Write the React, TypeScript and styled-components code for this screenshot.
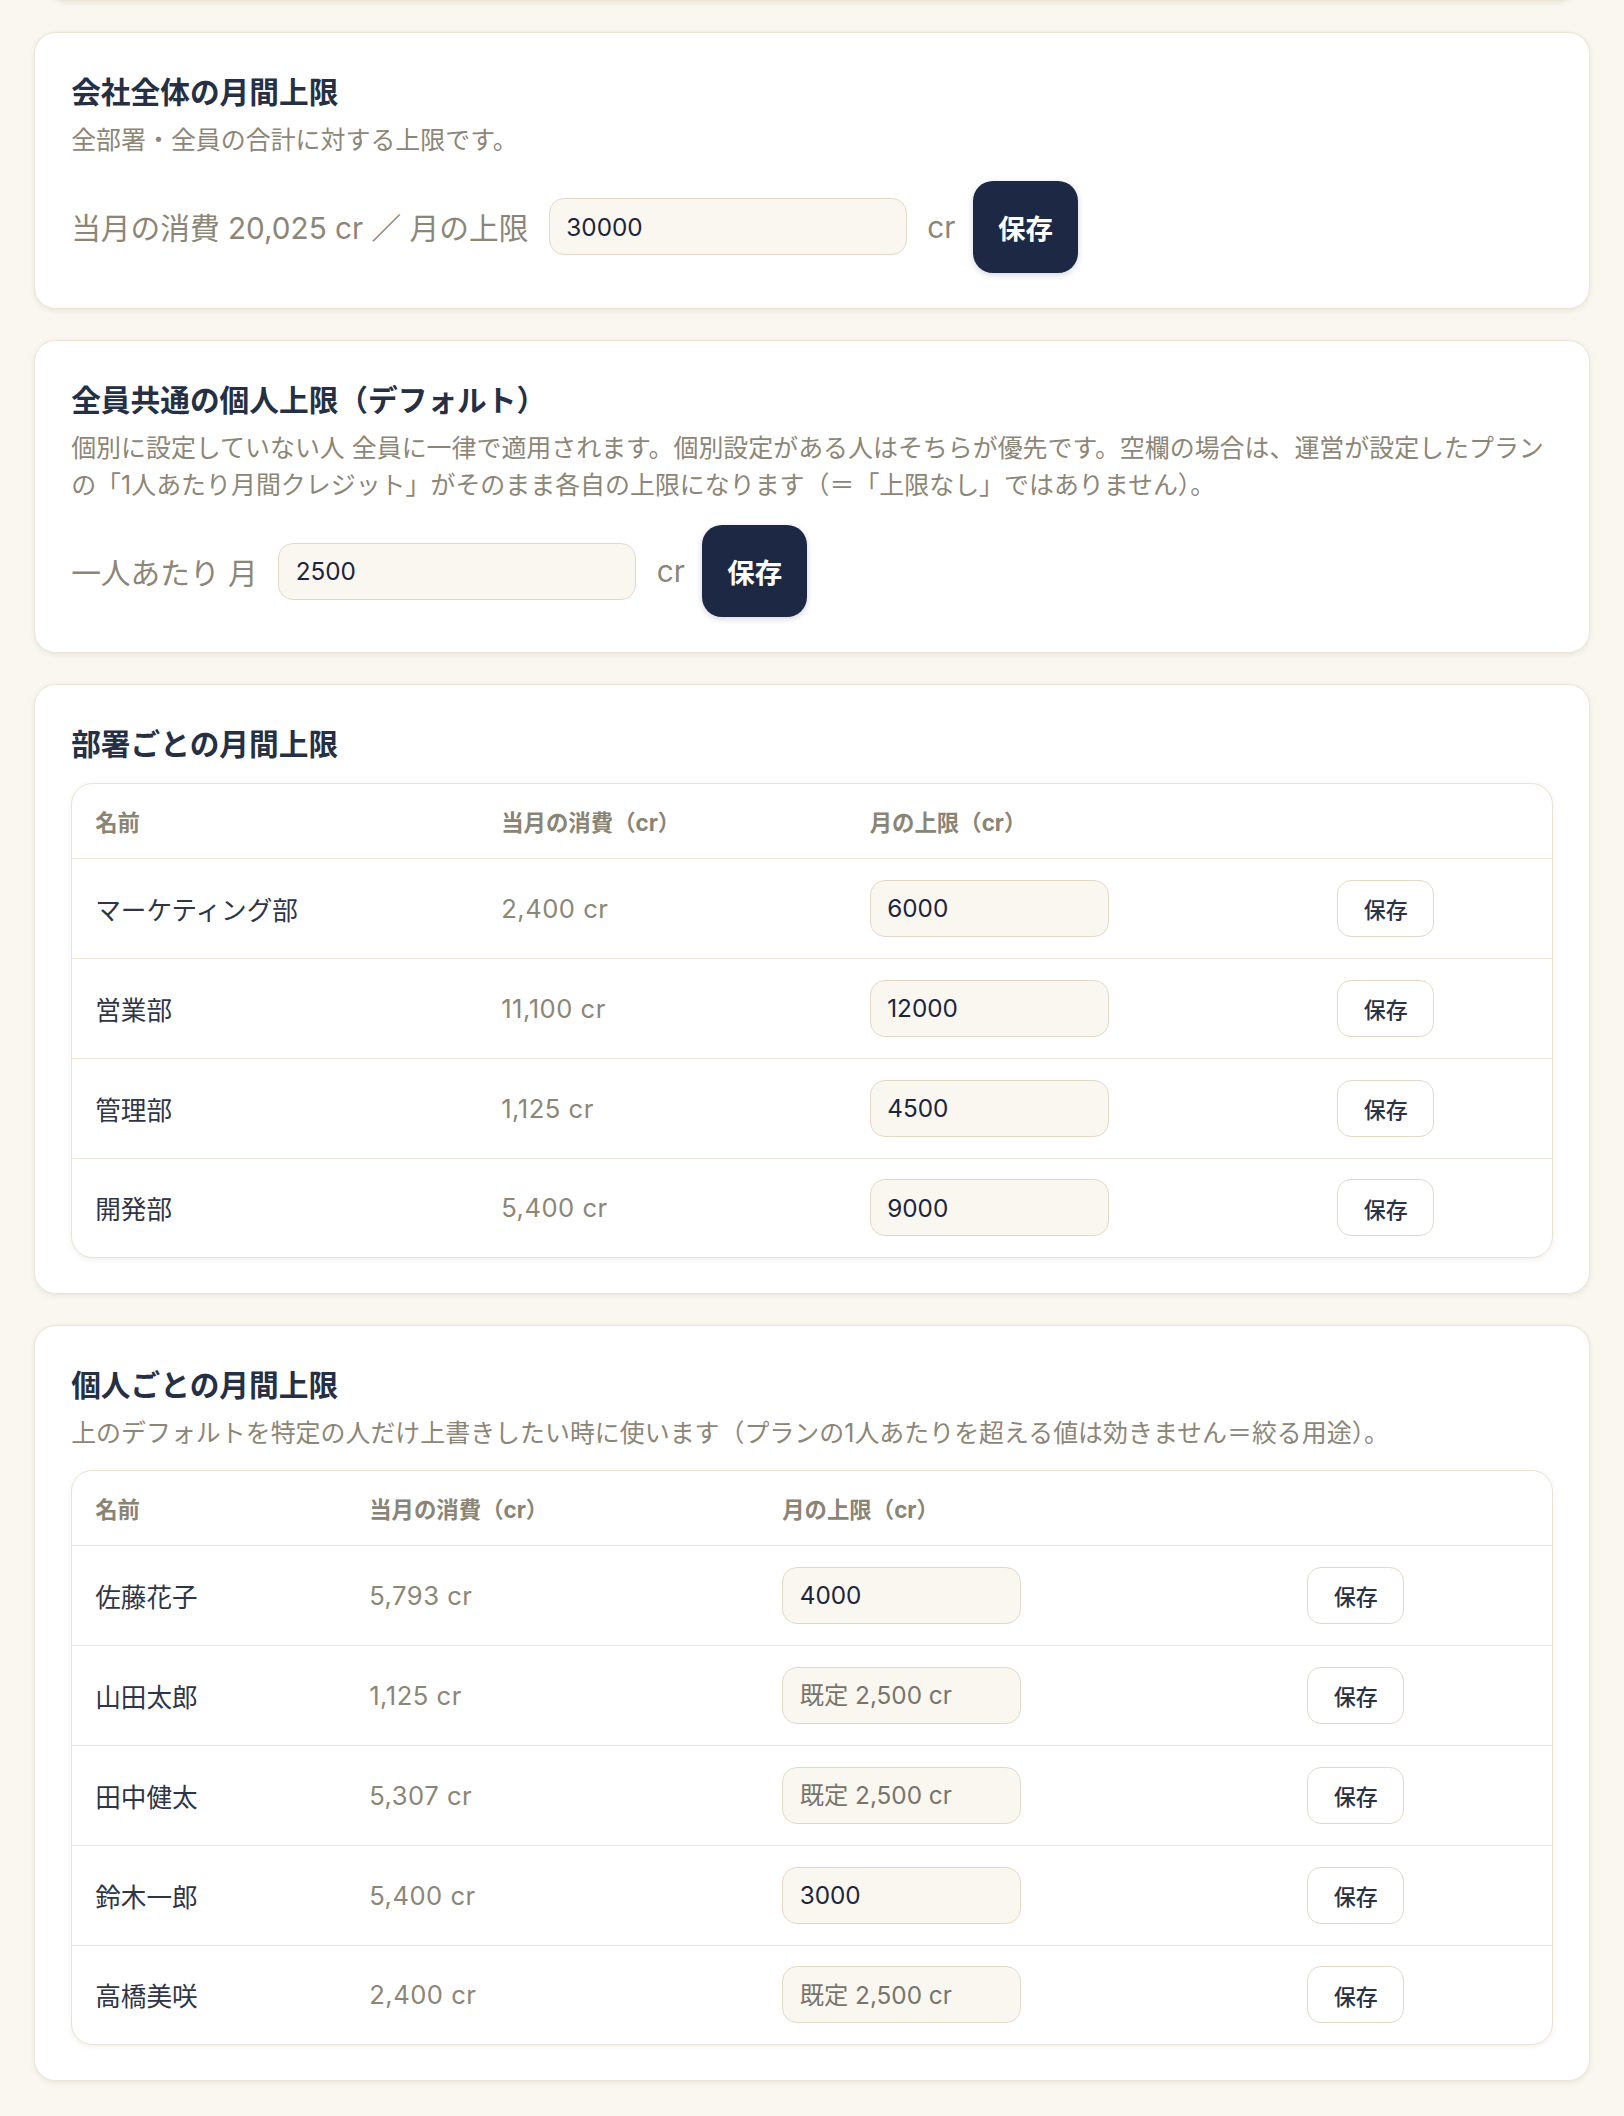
import { createGlobalStyle } from "styled-components";
import styled from "styled-components";

const GlobalStyle = createGlobalStyle`
    html, body {
        margin: 0;
        padding: 0;
        background: #faf7f0;
    }
    body {
        font-family: Inter, "Noto Sans CJK JP", sans-serif;
        color: #253045;
    }
    * {
        box-sizing: border-box;
    }
`

const Page = styled.div`
    display: flex;
    flex-direction: column;
    gap: 31px;
    padding: 0 33.7px 33px;
    min-height: 2116px;
    overflow: hidden;
`

/* bottom edge of the card above, scrolled out of view */
const CardTail = styled.div`
    height: 18px;
    margin-top: -16.6px;
    margin-left: 14px;
    margin-right: 14px;
    background: #fff;
    border-bottom: 1.35px solid #ece5d6;
    border-radius: 0 0 21.6px 21.6px;
    box-shadow: 0 1.5px 5px rgba(80, 70, 40, 0.1);
`

const Card = styled.section`
    background: #fff;
    border: 1.35px solid #ece5d6;
    border-radius: 21.6px;
    box-shadow: 0 1.5px 5px rgba(80, 70, 40, 0.09);
    padding: 38px 36.5px 35px;
`

const Title = styled.h2`
    margin: 0;
    font-size: 29.7px;
    line-height: 42px;
    font-weight: 700;
    color: #253045;
`

const Desc = styled.p`
    margin: 9px 0 0;
    font-size: 24.95px;
    line-height: 36.9px;
    color: #8c8677;
`

const ControlRow = styled.div`
    display: flex;
    align-items: center;
    gap: 20.5px;
    margin-top: 21.6px;
`

const Label = styled.span`
    font-size: 29.7px;
    color: #8c8677;
    white-space: nowrap;
`

const Unit = styled.span`
    font-size: 29.7px;
    color: #8c8677;
    margin-right: -3px;
`

const NumInput = styled.input<{ $w: number }>`
    width: ${p => p.$w}px;
    height: 57px;
    padding: 0 16.5px;
    border: 1.35px solid #e3d9c6;
    border-radius: 15px;
    background: #faf7f0;
    font-family: Inter, "Noto Sans CJK JP", sans-serif;
    font-size: 24.3px;
    color: #1c2540;
    outline: none;
    &::placeholder {
        color: #77746d;
    }
`

const PrimaryButton = styled.button`
    width: 105px;
    height: 92px;
    border: none;
    border-radius: 20px;
    background: #1d2944;
    color: #fff;
    font-family: Inter, "Noto Sans CJK JP", sans-serif;
    font-size: 27.5px;
    font-weight: 700;
    box-shadow: 0 2px 6px rgba(20, 30, 60, 0.18);
    cursor: pointer;
`

const TableBox = styled.div`
    margin-top: 18px;
    border: 1.35px solid #ebe3d2;
    border-radius: 21.6px;
    overflow: hidden;
    background: #fff;
    box-shadow: 0 1.5px 5px rgba(80, 70, 40, 0.08);
`

const Row = styled.div<{ $cols: string; $head?: boolean }>`
    display: grid;
    grid-template-columns: ${p => p.$cols};
    align-items: center;
    height: ${p => (p.$head ? "74.35px" : "100px")};
    border-bottom: 1.35px solid #ede6d8;
    &:last-child {
        border-bottom: none;
        height: 98.65px;
    }
`

const HeadCell = styled.div`
    padding-left: 23px;
    font-size: 22.4px;
    font-weight: 700;
    color: #8a8475;
`

const Cell = styled.div<{ $muted?: boolean }>`
    padding-left: 23px;
    font-size: 25.6px;
    letter-spacing: ${p => (p.$muted ? "0.5px" : "0")};
    color: ${p => (p.$muted ? "#8c8677" : "#2f3546")};
    display: flex;
    align-items: center;
`

const RowButton = styled.button`
    width: 97px;
    height: 57px;
    border: 1.35px solid #e3d9c6;
    border-radius: 14px;
    background: #fff;
    color: #2b3244;
    font-family: Inter, "Noto Sans CJK JP", sans-serif;
    font-size: 22px;
    font-weight: 500;
    cursor: pointer;
`

type Item = { name: string; used: string; limit: string };

const depts: Item[] = [
    { name: "マーケティング部", used: "2,400 cr", limit: "6000" },
    { name: "営業部", used: "11,100 cr", limit: "12000" },
    { name: "管理部", used: "1,125 cr", limit: "4500" },
    { name: "開発部", used: "5,400 cr", limit: "9000" },
]

const people: Item[] = [
    { name: "佐藤花子", used: "5,793 cr", limit: "4000" },
    { name: "山田太郎", used: "1,125 cr", limit: "" },
    { name: "田中健太", used: "5,307 cr", limit: "" },
    { name: "鈴木一郎", used: "5,400 cr", limit: "3000" },
    { name: "高橋美咲", used: "2,400 cr", limit: "" },
]

const LimitTable = ({ cols, items }: { cols: string; items: Item[] }) => (
    <TableBox>
        <Row $cols={cols} $head>
            <HeadCell>名前</HeadCell>
            <HeadCell>当月の消費（cr）</HeadCell>
            <HeadCell>月の上限（cr）</HeadCell>
            <HeadCell />
        </Row>
        {items.map((it, idx) => (
            <Row $cols={cols} key={idx}>
                <Cell>{it.name}</Cell>
                <Cell $muted>{it.used}</Cell>
                <Cell>
                    <NumInput $w={239} defaultValue={it.limit} placeholder="既定 2,500 cr" />
                </Cell>
                <Cell>
                    <RowButton>保存</RowButton>
                </Cell>
            </Row>
        ))}
    </TableBox>
)

const App = () => {
    return (
        <>
            <GlobalStyle />
            <Page>
                <CardTail />
                <Card>
                    <Title>会社全体の月間上限</Title>
                    <Desc>全部署・全員の合計に対する上限です。</Desc>
                    <ControlRow>
                        <Label>当月の消費 20,025 cr ／ 月の上限</Label>
                        <NumInput $w={358} defaultValue="30000" />
                        <Unit>cr</Unit>
                        <PrimaryButton>保存</PrimaryButton>
                    </ControlRow>
                </Card>
                <Card>
                    <Title>全員共通の個人上限（デフォルト）</Title>
                    <Desc>
                        個別に設定していない人 全員に一律で適用されます。個別設定がある人はそちらが優先です。空欄の場合は、運営が設定したプランの「1人あたり月間クレジット」がそのまま各自の上限になります（＝「上限なし」ではありません）。
                    </Desc>
                    <ControlRow>
                        <Label>一人あたり 月</Label>
                        <NumInput $w={358} defaultValue="2500" />
                        <Unit>cr</Unit>
                        <PrimaryButton>保存</PrimaryButton>
                    </ControlRow>
                </Card>
                <Card>
                    <Title>部署ごとの月間上限</Title>
                    <LimitTable cols="406px 368.5px 467.5px 1fr" items={depts} />
                </Card>
                <Card>
                    <Title>個人ごとの月間上限</Title>
                    <Desc>上のデフォルトを特定の人だけ上書きしたい時に使います（プランの1人あたりを超える値は効きません＝絞る用途）。</Desc>
                    <LimitTable cols="274px 413px 525px 1fr" items={people} />
                </Card>
            </Page>
        </>
    )
}

export default App;
